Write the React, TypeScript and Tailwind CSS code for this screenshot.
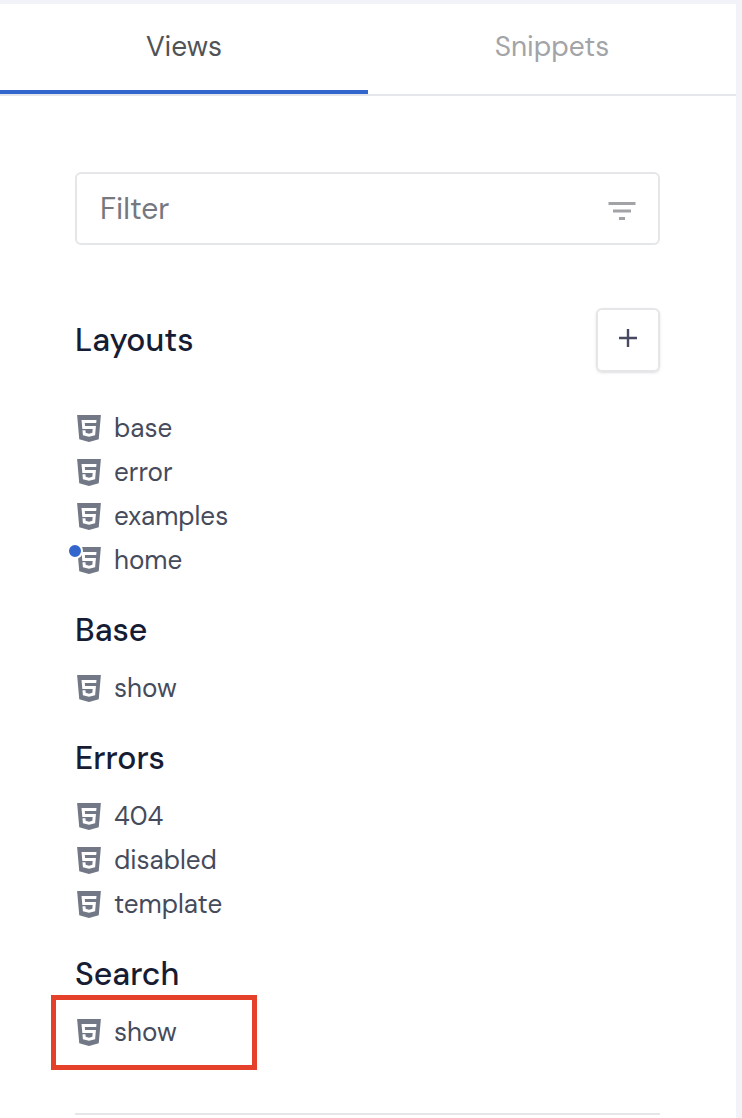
import { useState } from "react";

type Item = { name: string; modified?: boolean; highlighted?: boolean };
type Group = { title: string; items: Item[] };

const groups: Group[] = [
  {
    title: "Layouts",
    items: [{ name: "base" }, { name: "error" }, { name: "examples" }, { name: "home", modified: true }],
  },
  { title: "Base", items: [{ name: "show" }] },
  { title: "Errors", items: [{ name: "404" }, { name: "disabled" }, { name: "template" }] },
  { title: "Search", items: [{ name: "show", highlighted: true }] },
];

function Html5Icon() {
  return (
    <svg viewBox="0 0.33 24 24" className="size-9 text-[#727885]" fill="currentColor" aria-hidden="true">
      <path d="M12 17.56l4.07-1.13.55-6.1H9.38L9.2 8.3h7.6l.2-1.99H7l.56 6.01h6.89l-.23 2.58-2.22.6-2.22-.6-.14-1.66h-2l.29 3.19L12 17.56M4.07 3h15.86L18.5 19.2 12 21l-6.5-1.8L4.07 3z" />
    </svg>
  );
}

function FilterIcon() {
  return (
    <svg viewBox="0 0 24 24" className="size-9 shrink-0 text-[#a1a3a6]" fill="currentColor" aria-hidden="true">
      <path d="M6 13h12v-2H6M3 6v2h18V6M10 18h4v-2h-4v2z" />
    </svg>
  );
}

function PlusIcon() {
  return (
    <svg viewBox="0 0 18 18" className="size-[18px]" fill="none" stroke="currentColor" strokeWidth="2.4" aria-hidden="true">
      <path d="M9 0v18M0 9h18" />
    </svg>
  );
}

function FileRow({ item }: { item: Item }) {
  return (
    <li className="relative">
      <a href={`#${item.name}`} className="-ml-1 flex h-11 items-center gap-[7px] text-[26px] leading-9 text-[#464b5c]">
        <span className="relative size-9 shrink-0">
          <Html5Icon />
          {item.modified && (
            <span className="absolute -left-1 top-0 size-4 rounded-full border-2 border-white bg-[#3366cc]" />
          )}
        </span>
        <span className="pb-[3px]">{item.name}</span>
      </a>
      {item.highlighted && (
        <span className="pointer-events-none absolute -top-4 -bottom-[15px] -left-6 w-[206px] border-[5px] border-[#e5412a]" />
      )}
    </li>
  );
}

export default function App() {
  const [tab, setTab] = useState("Views");
  const [query, setQuery] = useState("");

  return (
    <div className="bg-[#f2f3f8] pt-1 pr-1.5 font-['DM_Sans','Inter',sans-serif]">
      <div className="bg-white">
        <div role="tablist" className="flex border-b-2 border-[#e5e6ec]">
          {["Views", "Snippets"].map((name) => (
            <button
              key={name}
              role="tab"
              aria-selected={tab === name}
              onClick={() => setTab(name)}
              className={
                tab === name
                  ? "flex-1 border-b-4 border-[#3366cc] py-[23px] text-[28px] leading-10 text-[#505356]"
                  : "flex-1 border-b-4 border-transparent py-[23px] text-[28px] leading-10 text-[#a2a4a7]"
              }
            >
              {name}
            </button>
          ))}
        </div>

        <div className="pt-[76px] pr-[76px] pl-[75px]">
          <label className="flex h-[73px] items-center rounded-md border-2 border-[#e5e6e7] pr-[18px] pl-[23px]">
            <input
              aria-label="Filter"
              placeholder="Filter"
              value={query}
              onChange={(event) => setQuery(event.target.value)}
              className="min-w-0 flex-1 bg-transparent text-[30px] leading-10 text-[#464b5c] outline-none placeholder:text-[#75787f]"
            />
            <span className="pt-1">
              <FilterIcon />
            </span>
          </label>

          {groups.map((group, index) => (
            <section key={group.title}>
              {index === 0 ? (
                <div className="mt-[63px] mb-[35px] flex items-center justify-between">
                  <h2 className="text-[32px] leading-10 font-medium text-[#171c35]">{group.title}</h2>
                  <button
                    aria-label="Add layout"
                    className="flex size-16 items-center justify-center rounded-md border-2 border-[#e5e6e8] pb-1 text-[#464960] shadow-sm"
                  >
                    <PlusIcon />
                  </button>
                </div>
              ) : (
                <h2 className="pt-[27px] pb-[17px] text-[32px] leading-10 font-medium text-[#171c35]">{group.title}</h2>
              )}
              <ul>
                {group.items
                  .filter((item) => item.name.includes(query.toLowerCase()))
                  .map((item) => (
                    <FileRow key={item.name} item={item} />
                  ))}
              </ul>
            </section>
          ))}

          <hr className="mt-[58px] border-t-2 border-[#e5e6e8] pb-1" />
        </div>
      </div>
    </div>
  );
}
